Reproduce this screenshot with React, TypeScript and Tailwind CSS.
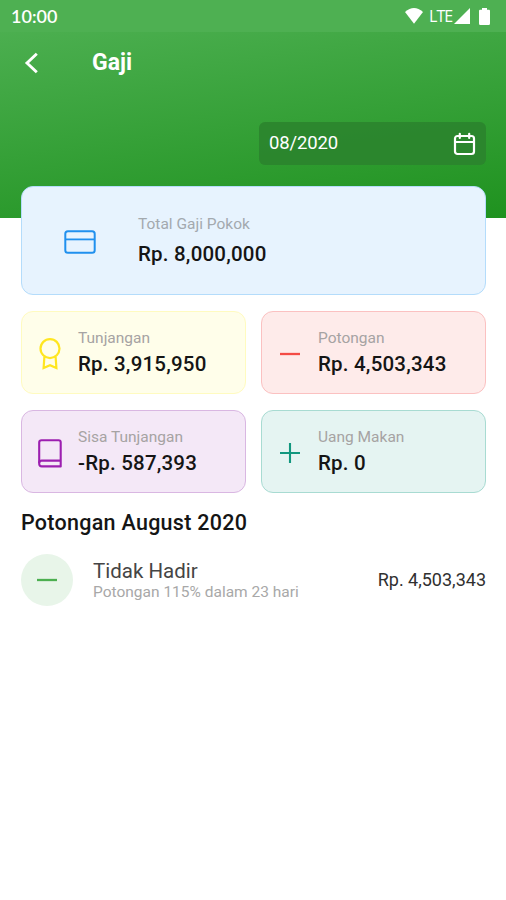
import type { ReactNode } from 'react'

interface Stat { label: string; value: string; box: string; icon: ReactNode }

const CardIcon = () => (
  <svg width="32" height="24" viewBox="0 0 32 24" fill="none" stroke="#2090ee" strokeWidth="2">
    <rect x="1.3" y="1.2" width="29.4" height="21.6" rx="2.6" />
    <path d="M1.3 9.4H30.7" strokeWidth="1.8" />
  </svg>
)

const AwardIcon = () => (
  <svg width="24" height="32" viewBox="0 0 24 32" fill="none" stroke="#ffe620" strokeWidth="2.2">
    <circle cx="12" cy="10.6" r="9.5" />
    <path d="M6.4 18.6L5.6 30L12 27.2L18.4 30L17.6 18.6" />
  </svg>
)

const BookIcon = () => (
  <svg width="24" height="29" viewBox="0 0 24 29" fill="none" stroke="#9c1fb0" strokeWidth="2.1" strokeLinejoin="round">
    <path d="M3.6 1.2H20.6Q22.7 1.2 22.7 3.2V27.4H3.8Q1.2 27.4 1.2 24.8V3.6Q1.2 1.2 3.6 1.2Z" />
    <path d="M1.2 24Q1.2 21.6 3.8 21.6H22.7" />
  </svg>
)

const MinusIcon = ({ color }: { color: string }) => (
  <svg width="22" height="22" viewBox="0 0 22 22" fill="none" stroke={color} strokeWidth="2.3">
    <path d="M1 11H21" />
  </svg>
)

const PlusIcon = () => (
  <svg width="22" height="22" viewBox="0 0 22 22" fill="none" stroke="#12977f" strokeWidth="2.1">
    <path d="M1 11H21M11 1V21" />
  </svg>
)

const STATS: Stat[] = [
  { label: 'Tunjangan', value: 'Rp. 3,915,950', box: 'bg-[#fffeea] border-[#fffbc0]', icon: <AwardIcon /> },
  { label: 'Potongan', value: 'Rp. 4,503,343', box: 'bg-[#feebea] border-[#fbc1c1]', icon: <MinusIcon color="#f44b45" /> },
  { label: 'Sisa Tunjangan', value: '-Rp. 587,393', box: 'bg-[#f4e8f7] border-[#d9b7e2]', icon: <BookIcon /> },
  { label: 'Uang Makan', value: 'Rp. 0', box: 'bg-[#e5f4f2] border-[#a8dbd2]', icon: <PlusIcon /> },
]

function StatusBar() {
  return (
    <div className="flex h-8 items-center justify-between bg-[#4eb052] pl-[11px] pr-[16px]">
      <span className="font-[Lato] text-[18px] font-semibold">10:00</span>
      <div className="flex items-center">
        <svg width="20" height="16" viewBox="0 0 20 16" fill="#fff">
          <path d="M1 4Q10 -4 19 4L10 15.7Z" />
        </svg>
        <span className="ml-[5px] w-[23px] font-['Open_Sans'] text-[16px] leading-5 tracking-[-0.9px]">LTE</span>
        <svg className="ml-[2px]" width="16" height="16" viewBox="0 0 16 16" fill="#fff">
          <path d="M0 16L16 0V16Z" />
        </svg>
        <svg className="ml-[9px]" width="11" height="17" viewBox="0 0 11 17" fill="#fff">
          <path d="M3 0H8V1.7H10Q11 1.7 11 3V15.5Q11 17 9.7 17H1.3Q0 17 0 15.5V3Q0 1.7 1 1.7H3Z" />
        </svg>
      </div>
    </div>
  )
}

export default function App() {
  return (
    <div className="min-h-[900px] w-full bg-white font-[Roboto,sans-serif] text-[#151515]">
      <header className="h-[218px] bg-[linear-gradient(172deg,#4caf50_10%,#1f921f_100%)] text-white">
        <StatusBar />
        <div className="flex h-[62px] items-center pl-[24px]">
          <svg width="15" height="22" viewBox="0 0 15 22" fill="none" stroke="#fff" strokeWidth="2.9">
            <path d="M12.8 1.8L3 11L12.8 20.2" />
          </svg>
          <h1 className="ml-[53px] text-[23px] leading-7 font-bold">Gaji</h1>
        </div>
        <div className="mt-7 flex justify-end pr-5">
          <div className="flex h-[43px] w-[227px] items-center justify-between rounded-md bg-[#2b842d]/90 pl-2.5 pr-[10px]">
            <span className="text-[18.5px] tracking-[-0.15px]">08/2020</span>
            <svg width="23" height="24" viewBox="0 0 23 24" fill="none" stroke="#fff" strokeWidth="2.2" strokeLinecap="round">
              <rect x="2" y="4" width="19" height="18" rx="2.5" />
              <path d="M2 10H21M6.8 1.8V6M16.2 1.8V6" />
            </svg>
          </div>
        </div>
      </header>

      <main className="relative -mt-8 px-5 pl-[21px]">
        <section className="flex h-[109px] items-center rounded-xl border-[1.5px] border-[#b4dcfb] bg-[#e7f3fe] pl-[42px]">
          <div className="mt-0.5">
            <CardIcon />
          </div>
          <div className="-mt-px ml-[42px]">
            <p className="text-[15.5px] leading-[18px] text-[#a3a9ae]">Total Gaji Pokok</p>
            <p className="mt-[9px] text-[20.5px] leading-6 font-medium tracking-[0.2px]">Rp. 8,000,000</p>
          </div>
        </section>

        <section className="mt-4 grid grid-cols-2 gap-x-[15px] gap-y-4">
          {STATS.map(s => (
            <div key={s.label} className={`flex h-[83px] items-center rounded-xl border-[1.5px] pl-4 ${s.box}`}>
              <div className="mt-[3px] flex w-6 justify-center">{s.icon}</div>
              <div className="ml-4">
                <p className="text-[15.5px] leading-[18px] text-[#a6a3a3]">{s.label}</p>
                <p className="mt-[5px] text-[20.5px] leading-6 font-medium tracking-[0.2px]">{s.value}</p>
              </div>
            </div>
          ))}
        </section>

        <h2 className="mt-4 text-[21.5px] leading-7 font-medium tracking-[0.28px]">Potongan August 2020</h2>

        <div className="mt-[17px] flex items-center">
          <div className="flex size-[52px] items-center justify-center rounded-full bg-[#e8f5e9]">
            <MinusIcon color="#4caf50" />
          </div>
          <div className="ml-5 flex-1">
            <p className="text-[20.5px] leading-6 text-[#454545]">Tidak Hadir</p>
            <p className="text-[15.5px] leading-[18px] text-[#a8a8a8]">Potongan 115% dalam 23 hari</p>
          </div>
          <span className="-mt-0.5 text-[18px] text-[#303030]">Rp. 4,503,343</span>
        </div>
      </main>
    </div>
  )
}
